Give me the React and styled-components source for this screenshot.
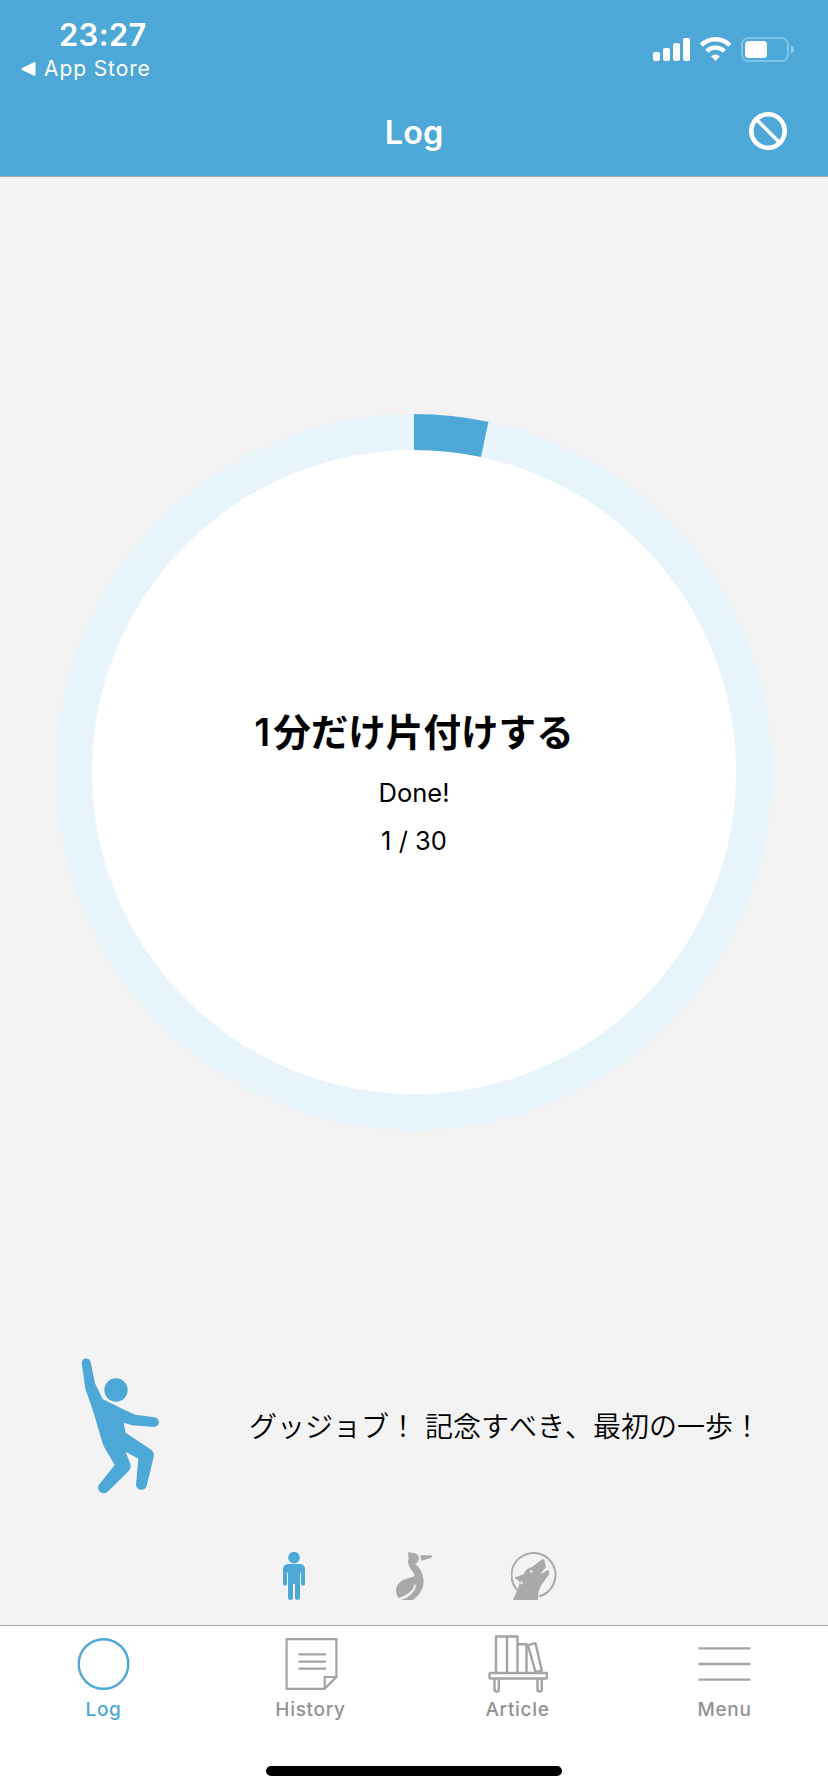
import styled, { createGlobalStyle } from "styled-components";

const blue = "#4da8d7";
const gray = "#a9a9a9";

const GlobalStyle = createGlobalStyle`
  * {
    box-sizing: border-box;
  }
  body {
    margin: 0;
    background: #f3f3f3;
    color: #000;
    font-family: "Inter", "Noto Sans CJK JP", sans-serif;
  }
  svg {
    display: block;
  }
`;

const Screen = styled.div`
  width: 828px;
  height: 1792px;
  display: flex;
  flex-direction: column;
  overflow: hidden;
`;

const Header = styled.header`
  height: 177px;
  flex: none;
  background: ${blue};
  border-bottom: 1px solid ${gray};
  color: #fff;
`;

const StatusBar = styled.div`
  height: 88px;
  display: flex;
  justify-content: space-between;
  padding: 16px 34px 0 21px;
`;

const Clock = styled.div`
  padding-left: 38px;
  font-size: 31px;
  font-weight: 600;
  line-height: 38px;
  letter-spacing: 0.3px;
`;

const BackLink = styled.div`
  display: flex;
  align-items: center;
  gap: 8px;
  font-size: 21px;
  line-height: 30px;
  letter-spacing: 0.9px;
`;

const StatusIcons = styled.div`
  display: flex;
  align-items: flex-start;
  gap: 9px;
  padding-top: 21px;
`;

const NavBar = styled.div`
  height: 88px;
  display: grid;
  grid-template-columns: 1fr auto 1fr;
  align-items: center;
  padding: 0 41px 2px;

  svg {
    grid-column: 3;
    justify-self: end;
  }
`;

const NavTitle = styled.h1`
  grid-column: 2;
  margin: 0;
  padding-top: 3px;
  font-size: 32.5px;
  font-weight: 600;
  line-height: 40px;
`;

const Main = styled.main`
  flex: 1;
  display: flex;
  flex-direction: column;
  align-items: center;
  padding-top: 237px;
`;

const Progress = styled.section`
  display: grid;
  place-items: center;

  > * {
    grid-area: 1 / 1;
  }
`;

const ProgressText = styled.div`
  text-align: center;
  margin-top: 25px;
`;

const Habit = styled.h2`
  margin: 0 0 8px;
  font-size: 37.6px;
  font-weight: 600;
  line-height: 56px;
  font-kerning: none;

  span {
    margin-right: 3px;
  }
`;

const Count = styled.p`
  margin: 0;
  font-size: 25.5px;
  line-height: 48px;
`;

const Coach = styled.section`
  width: 100%;
  height: 170px;
  margin-top: 210px;
  padding-left: 60px;
  display: flex;
  align-items: center;
  gap: 69px;
`;

const Message = styled.p`
  margin: 0;
  padding-top: 4px;
  font-size: 28px;
  font-weight: 350;
  line-height: 40px;
  font-kerning: none;
  white-space: nowrap;
`;

const Stages = styled.div`
  display: grid;
  grid-template-columns: repeat(3, 120px);
  justify-items: center;
  margin-top: 42px;
`;

const TabBar = styled.nav`
  height: 167px;
  flex: none;
  display: flex;
  flex-direction: column;
  align-items: center;
  justify-content: space-between;
  background: #fff;
  border-top: 1px solid ${gray};
  padding: 8px 0 16px;
`;

const Tabs = styled.div`
  width: 100%;
  display: grid;
  grid-template-columns: repeat(4, 1fr);
`;

const Tab = styled.div`
  display: flex;
  flex-direction: column;
  align-items: center;
  gap: 4px;
  color: ${(props) => (props.$active ? blue : "#929292")};
  font-size: 19px;
  font-weight: 500;
  line-height: 24px;
  letter-spacing: 0.7px;
`;

const HomeIndicator = styled.div`
  width: 296px;
  height: 10px;
  border-radius: 5px;
  background: #000;
`;

const Signal = () => (
  <svg width="37" height="25" viewBox="0 0 37 25" fill="#fff">
    <rect x="0" y="15" width="7" height="9" rx="2" />
    <rect x="10" y="11" width="7" height="13" rx="2" />
    <rect x="20" y="6" width="7" height="18" rx="2" />
    <rect x="30" y="1" width="7" height="23" rx="2" />
  </svg>
);

const Wifi = () => (
  <svg width="33" height="25" viewBox="0 0 33 25" fill="none" stroke="#fff">
    <path d="M2.3 8.200a20 20 0 0 1 28.4 0" strokeWidth="4.4" />
    <path d="M7.7 14.2a12.6 12.6 0 0 1 17.6 0" strokeWidth="4.4" />
    <path d="M12.1 19.2a6.4 6.4 0 0 1 8.8 0L16.5 24z" fill="#fff" stroke="none" />
  </svg>
);

const Battery = () => (
  <svg width="53" height="25" viewBox="0 0 53 25">
    <rect x="1" y="1" width="46" height="23" rx="6.5" fill="none" stroke="#7fc6e6" strokeWidth="2" />
    <rect x="4" y="4" width="22" height="17" rx="3.5" fill="#fff" />
    <path d="M50 8.5c4 1.5 4 6.5 0 8z" fill="#8fcfe9" />
  </svg>
);

const Ban = () => (
  <svg width="38" height="38" viewBox="0 0 38 38" fill="none" stroke="#fff">
    <circle cx="19" cy="19" r="16.7" strokeWidth="4.6" />
    <path d="M7.5 7.5l23 23" strokeWidth="3.6" />
  </svg>
);

const Ring = ({ done, total }) => {
  const angle = (done / total) * 2 * Math.PI;
  const x = 358 + 340 * Math.sin(angle);
  const y = 358 - 340 * Math.cos(angle);
  return (
    <svg width="716" height="716" viewBox="0 0 716 716" strokeWidth="36">
      <circle cx="358" cy="358" r="340" fill="#fff" stroke="#e7f4fb" />
      <path d={`M358 18A340 340 0 0 1 ${x} ${y}`} fill="none" stroke={blue} />
    </svg>
  );
};

const Dancer = () => (
  <svg width="120" height="170" viewBox="0 0 360 510" fill={blue}>
    <circle cx="168" cy="150" r="35" />
    <path d="M65 70C64 52 90 50 92 67L105 130L128 177Q175 202 226 224L284 232C302 236 300 261 282 261L217 256L191 248L197 278L271 328Q284 337 281 350L260 438C255 455 229 452 228 434L235 356L197 335L212 374Q214 384 206 393L143 455C128 468 106 450 117 434L164 375L132 320Q127 310 124 297Q103 218 76 146Z" />
  </svg>
);

const Man = () => (
  <svg width="22" height="48" viewBox="0 0 66 144" fill={blue}>
    <circle cx="33" cy="17" r="17.5" />
    <path d="M14 36H52Q66 38 66 52V96Q66 101 60 101Q54 101 54 96V62H51V138Q51 144 43 144Q36 144 36 138V96H30V138Q30 144 23 144Q15 144 15 138V62H12V96Q12 101 6 101Q0 101 0 96V52Q0 38 14 36Z" />
  </svg>
);

const Bird = () => (
  <svg width="36" height="48" viewBox="0 0 108 144" fill={gray}>
    <path d="M37 1Q41 -1 45 2Q69 2 69 20Q67 31 57 35Q83 57 83 88Q82 122 51 144H16Q47 134 59 107Q60 99 57 96Q53 99 53 107Q40 127 9 138Q0 132 0 110Q6 86 32 80Q54 76 56 70Q54 63 44 50Q35 40 36 26Q40 17 36 9Z" />
    <path d="M74 10H107Q110 15 105 18L76 26Q73 17 74 10Z" />
  </svg>
);

const Wolf = () => (
  <svg width="46" height="48" viewBox="0 0 138 144" fill={gray}>
    <path d="M21 116A66 66 0 1 1 84 133" fill="none" stroke={gray} strokeWidth="6" />
    <path d="M6 144L22 107Q22 99 27 93L22 85Q14 84 11 76Q25 73 39 66Q45 48 62 46L94 22Q99 18 101 28L105 44Q104 49 92 59V66Q103 57 111 54Q117 57 115 66L91 99Q80 119 81 144Z" />
    <path d="M57 56Q65 53 65 60Q61 64 57 61ZM28 87Q37 89 35 97Q31 94 29 99Z" fill="#f3f3f3" />
  </svg>
);

const CircleIcon = () => (
  <svg width="60" height="60" viewBox="0 0 60 60" fill="none" stroke={blue}>
    <circle cx="29.5" cy="30" r="24.8" strokeWidth="2.4" />
  </svg>
);

const NoteIcon = () => (
  <svg width="60" height="60" viewBox="0 0 60 60" fill="none" stroke="#a3a3a3" strokeWidth="2.2">
    <path d="M5.6 5.1H55.4V43L43.5 54.9H5.6ZM55 43H43.7V54.5M17.5 20.3H45M17.5 27.6H45M17.5 34.6H45" />
  </svg>
);

const ShelfIcon = () => (
  <svg width="60" height="60" viewBox="0 0 60 60" fill="none" stroke="#a3a3a3" strokeWidth="2.4">
    <path d="M8 38V2.500H29.500V38M19 2.500V38M29.500 10.200H38.500V38M40 11.200L47.500 9.200L54 37.500M40 11.200L47.500 38L54 36.800" strokeLinejoin="round" />
    <rect x="1.500" y="39" width="57.500" height="5.500" rx="1" />
    <path d="M6.500 45V55.500Q6.500 57.500 8.700 57.500Q10.800 57.500 10.800 55.500V45M49.500 45V55.500Q49.500 57.500 51.700 57.500Q53.800 57.500 53.800 55.500V45" />
  </svg>
);

const MenuIcon = () => (
  <svg width="60" height="60" viewBox="0 0 60 60" stroke="#a3a3a3" strokeWidth="2.3">
    <path d="M3.5 14.3H55.5M3.5 30H55.5M3.5 45.6H55.5" />
  </svg>
);

const tabs = [
  { label: "Log", Icon: CircleIcon, active: true },
  { label: "History", Icon: NoteIcon },
  { label: "Article", Icon: ShelfIcon },
  { label: "Menu", Icon: MenuIcon },
];

const App = () => {
  return (
    <Screen>
      <GlobalStyle />
      <Header>
        <StatusBar>
          <div>
            <Clock>23:27</Clock>
            <BackLink>
              <svg width="15" height="14" viewBox="0 0 15 14" fill="#fff">
                <path d="M1 6L13 .3Q14.5 0 14.5 1.5V12.5Q14.5 14 13 13.7L1 8Q-.3 7 1 6Z" />
              </svg>
              App Store
            </BackLink>
          </div>
          <StatusIcons>
            <Signal />
            <Wifi />
            <Battery />
          </StatusIcons>
        </StatusBar>
        <NavBar>
          <NavTitle>Log</NavTitle>
          <Ban />
        </NavBar>
      </Header>
      <Main>
        <Progress>
          <Ring done={1} total={30} />
          <ProgressText>
            <Habit>
              <span>1</span>分だけ片付けする
            </Habit>
            <Count>Done!</Count>
            <Count>1 / 30</Count>
          </ProgressText>
        </Progress>
        <Coach>
          <Dancer />
          <Message>グッジョブ！ 記念すべき、最初の一歩！</Message>
        </Coach>
        <Stages>
          <Man />
          <Bird />
          <Wolf />
        </Stages>
      </Main>
      <TabBar>
        <Tabs>
          {tabs.map(({ label, Icon, active }) => (
            <Tab key={label} $active={active}>
              <Icon />
              {label}
            </Tab>
          ))}
        </Tabs>
        <HomeIndicator />
      </TabBar>
    </Screen>
  );
};

export default App;
